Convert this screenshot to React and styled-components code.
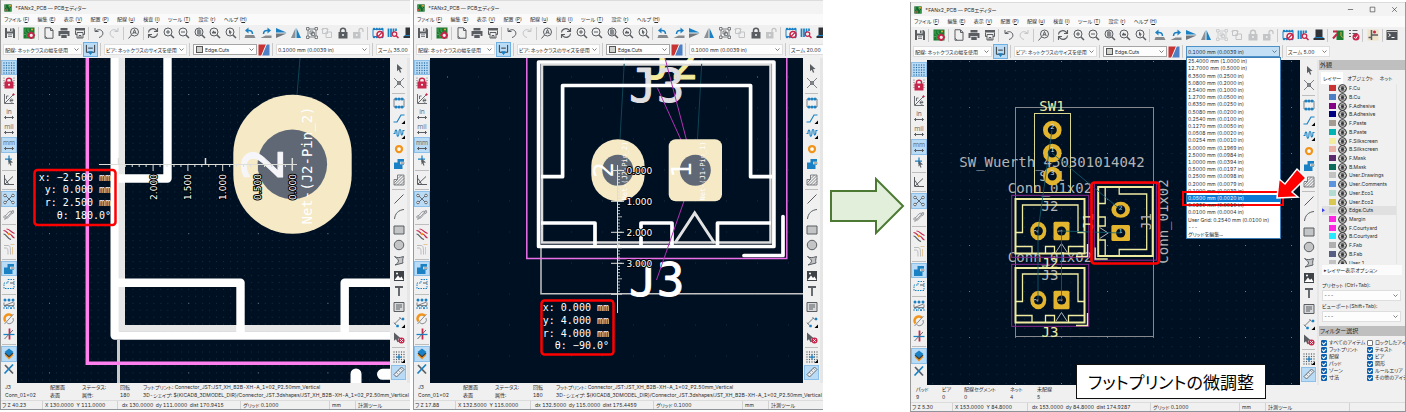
import React from "react";
import styled, { createGlobalStyle } from "styled-components";

const C = {
  ink: "#5a5e63",
  blue: "#1a81c4",
  chrome: "#f0f0f0",
  active: "#b9dbf5",
  board: "#001023",
  pad: "#f5e9c6",
  hole: "#5f6874",
  gold: "#e3b42d",
  silk: "#efeca2",
  fab: "#b2b4b6",
  rats: "#0d4554",
  red: "#ff0000",
};

const GlobalStyle = createGlobalStyle`
  * { box-sizing: border-box; }
  body {
    margin: 0;
    background: #fff;
    color: #2b2b2b;
    font-family: Inter, "Noto Sans CJK JP", sans-serif;
    font-size: 5px;
    font-feature-settings: "palt", "tnum";
  }
  button, select, input { font: inherit; font-feature-settings: inherit; color: inherit; margin: 0; padding: 0; }
`;

/* ---------- page ---------- */

const Page = styled.main`
  display: grid;
  grid-template-columns: minmax(0, 410fr) minmax(0, 410fr) 81px minmax(0, 496fr);
  gap: 3px;
  align-items: start;
  overflow: hidden;
`;

const ArrowCell = styled.div`
  align-self: center;
  display: flex;
  justify-content: center;
`;

const WindowFrame = styled.section`
  margin-top: ${(p) => (p.$lowered ? "2px" : "0")};
  border-left: 1px solid #9a9a9a;
  border-right: ${(p) => (p.$lowered ? "1px solid #9a9a9a" : "0")};
  border-bottom: 1px solid #8d959b;
  background: ${C.chrome};
`;

const TitleBar = styled.header`
  display: flex;
  align-items: center;
  gap: 3px;
  height: 14px;
  padding: 0 6px 0 3px;
  background: #f3f3f3;
  border-top: 1px solid #dcdcdc;
`;

const Title = styled.h1`
  flex: 1;
  margin: 0;
  font-size: 5px;
  font-weight: 400;
  white-space: nowrap;
`;

const WindowButton = styled.button`
  display: flex;
  width: 8px;
  margin-left: 11px;
  border: 0;
  background: none;
`;

const MenuBar = styled.nav`
  display: flex;
  align-items: center;
  gap: 8px;
  height: 11px;
  padding-left: 3px;
  background: #fafafa;
  overflow: hidden;
`;

const MenuButton = styled.button`
  border: 0;
  background: none;
  line-height: 9px;
  white-space: nowrap;
`;

const ToolBar = styled.div`
  height: 16px;
  padding-left: 1px;
  overflow: hidden;
`;

const ToolStrip = styled.div`
  display: flex;
  align-items: center;
  width: 488px;
  height: 16px;
`;

const ToolButton = styled.button`
  flex: 1;
  min-width: 0;
  min-height: 0;
  display: flex;
  align-items: center;
  justify-content: center;
  border: 1px solid ${(p) => (p.$on ? "#8cc0e8" : "transparent")};
  background: ${(p) => (p.$on ? C.active : "none")};
  color: ${(p) => (p.disabled ? "#c2c4c6" : C.ink)};
`;

const Divider = styled.span`
  flex: none;
  width: 1px;
  height: 13px;
  margin: 0 2px 0 1px;
  background: #c9c9c9;
`;

const SideDivider = styled.span`
  flex: none;
  height: 1px;
  margin: 2px 1px 1px;
  background: #bdbdbd;
`;

const OptionBar = styled.div`
  display: flex;
  align-items: center;
  gap: 1px;
  height: 17px;
  padding-left: 2px;
  overflow: ${(p) => (p.$open ? "visible" : "hidden")};
`;

const Combo = styled.div`
  flex: none;
  position: relative;
  display: grid;
  align-items: center;
  width: ${(p) => (p.$fill ? "auto" : p.$width + "px")};
  height: 11px;
  border: 1px solid ${(p) => (p.$open ? "#4f91c7" : p.$boxed ? "#a5a5a5" : "#dedede")};
  background: ${(p) => (p.$open ? "#c2dff5" : "#fdfdfd")};
`;

const ComboSelect = styled.select`
  grid-area: 1 / 1;
  width: 100%;
  height: 9px;
  padding-left: ${(p) => (p.$swatch ? "11px" : "1px")};
  border: 0;
  background: none;
  appearance: none;
  white-space: nowrap;
`;

const ComboSwatch = styled.span`
  grid-area: 1 / 1;
  width: 7px;
  height: 7px;
  margin-left: 2px;
  border: 1px solid #555;
  background: #d0d2cd;
`;

const ComboArrow = styled.svg`
  grid-area: 1 / 1;
  justify-self: end;
  width: 5px;
  height: 5px;
  margin-right: 2px;
  fill: none;
  stroke: #555;
  pointer-events: none;
`;

const WidthButton = styled.button`
  flex: none;
  display: flex;
  align-items: center;
  justify-content: center;
  width: 15px;
  height: 15px;
  border: 1px solid #6fb0e2;
  background: ${C.active};
`;

const LayerPairButton = styled.button`
  flex: none;
  display: flex;
  width: 12px;
  height: 12px;
  border: 0;
  background: none;
`;

const GridMenu = styled.ul`
  position: absolute;
  z-index: 3;
  top: 10px;
  left: -1px;
  display: flex;
  flex-direction: column;
  width: 95px;
  height: 182px;
  margin: 0;
  padding: 0;
  border: 1px solid #3c7fb8;
  background: #fff;
  list-style: none;
`;

const GridOption = styled.li`
  position: relative;
  flex: 1;
  display: flex;
  align-items: center;
  min-height: 0;
  padding-left: 1px;
  line-height: 7px;
  white-space: nowrap;
  background: ${(p) => (p.$on ? "#0b78d3" : "transparent")};
  color: ${(p) => (p.$on ? "#fff" : "#2b2b2b")};
`;

const Callout = styled.span`
  position: absolute;
  inset: -4px -4px -4px -5px;
  border: 2px solid ${C.red};
`;

const CalloutArrow = styled.svg`
  position: absolute;
  z-index: 4;
  left: 88px;
  bottom: 2px;
  width: 32px;
  height: 34px;
`;

/* ---------- body ---------- */

const Body = styled.div`
  display: flex;
`;

const SideBar = styled.div`
  flex: none;
  display: flex;
  flex-direction: column;
  width: ${(p) => (p.$right ? "17px" : "16px")};
  padding: ${(p) => (p.$right ? "2px 1px 3px" : "2px 0 6px")};
`;

const Gutter = styled.span`
  flex: none;
  width: ${(p) => (p.$narrow ? "2px" : "3px")};
  background: #e6e6e6;
`;

const CanvasArea = styled.div`
  position: relative;
  flex: 1;
  min-width: 0;
  height: 325px;
  background: ${C.board};
`;

const Board = styled.svg`
  display: block;
  width: 100%;
  height: 100%;
`;

const BoardText = styled.text`
  font-family: "DejaVu Sans Mono", monospace;
  font-size: ${(p) => p.$size || 14}px;
  fill: ${(p) => p.$color || C.fab};
`;

const BigText = styled.text`
  font-family: "DejaVu Sans Mono", monospace;
  font-size: ${(p) => p.$size}px;
  fill: ${(p) => p.$color || "#fff"};
  stroke: ${(p) => p.$color || "#fff"};
  stroke-width: ${(p) => (p.$size > 30 ? 1 : 0)}px;
  stroke-linejoin: round;
`;

const RulerText = styled.text`
  font-family: "DejaVu Sans", sans-serif;
  font-size: 9px;
  fill: #fff;
  stroke: #000;
  stroke-width: 2px;
  stroke-linejoin: round;
  paint-order: stroke;
`;

const MeasureText = styled.text`
  font-family: "DejaVu Sans Mono", monospace;
  font-size: 10px;
  fill: #fff;
  stroke: ${(p) => (p.$halo ? "#000" : "#fff")};
  stroke-width: ${(p) => (p.$halo ? 2 : 0)}px;
  text-anchor: end;
`;

const Caption = styled.p`
  position: absolute;
  z-index: 2;
  right: 34px;
  bottom: -14px;
  display: flex;
  align-items: center;
  justify-content: center;
  width: 190px;
  height: 35px;
  margin: 0;
  border: 1px solid #111;
  background: #fff;
  color: #000;
  font-family: "Noto Sans CJK JP", sans-serif;
  font-size: 17px;
  white-space: nowrap;
`;

/* ---------- footer ---------- */

const InfoBar = styled.dl`
  display: flex;
  height: 17px;
  margin: 0;
  padding-left: ${(p) => (p.$wide ? "5px" : "4px")};
  overflow: hidden;
  white-space: nowrap;
`;

const InfoItem = styled.div`
  flex: none;
  width: ${(p) => p.$width}px;
  line-height: 8px;
  dd { margin: 0; }
`;

const StatusBar = styled.footer`
  display: flex;
  height: 9px;
  border-top: 1px solid #dcdcdc;
  line-height: 8px;
  overflow: hidden;
`;

const StatusCell = styled.span`
  flex: none;
  width: ${(p) => p.$width}px;
  padding-left: ${(p) => p.$pad || 2}px;
  border-right: 1px solid #d2d2d2;
  white-space: pre;
`;

/* ---------- appearance panel ---------- */

const Panel = styled.aside`
  flex: none;
  width: 86px;
  overflow: hidden;
`;

const PanelTitle = styled.h2`
  height: 10px;
  margin: ${(p) => (p.$spaced ? "4px" : "0")} 0 0;
  padding-left: 1px;
  background: #bfbfbf;
  font-size: 6px;
  font-weight: 400;
  line-height: 10px;
`;

const Tabs = styled.div`
  display: flex;
  gap: 2px;
  height: 12px;
  margin-top: 2px;
  padding-left: 2px;
`;

const Tab = styled.button`
  padding: 0 2px;
  border: 0;
  background: ${(p) => (p.$on ? "#fff" : "none")};
  line-height: 12px;
  white-space: nowrap;
`;

const LayerPane = styled.div`
  display: flex;
  height: 180px;
  overflow: hidden;
`;

const LayerList = styled.ul`
  flex: 1;
  display: grid;
  grid-template-rows: repeat(21, 1fr);
  height: 183px;
  margin: 0;
  padding: 0 0 0 3px;
  list-style: none;
`;

const LayerRow = styled.li`
  display: flex;
  align-items: center;
  gap: 2px;
  min-height: 0;
  background: ${(p) => (p.$on ? "#e0e0e0" : "none")};
  line-height: 8px;
  white-space: nowrap;
`;

const LayerMark = styled.span`
  width: 3px;
  height: 4px;
  margin-right: 2px;
  background: ${(p) => (p.$on ? "#3d3df0" : "none")};
  clip-path: polygon(0 0, 100% 50%, 0 100%);
`;

const Swatch = styled.span`
  width: 7px;
  height: 6px;
  background: ${(p) => p.$color};
`;

const EyeButton = styled.button`
  display: flex;
  width: 9px;
  height: 8px;
  border: 0;
  background: none;
`;

const ScrollTrack = styled.span`
  width: 9px;
  padding: 7px 4px 0;
  border-left: 1px solid #e4e4e4;
  &::before {
    content: "";
    display: block;
    height: 114px;
    background: #8a8a8a;
  }
`;

const Disclosure = styled.button`
  display: block;
  width: 80px;
  height: 10px;
  margin: 1px 0 0 3px;
  padding-left: 2px;
  border: 0;
  background: #fbfbfb;
  line-height: 10px;
  text-align: left;
  white-space: nowrap;
`;

const Field = styled.label`
  display: block;
  margin: ${(p) => (p.$first ? "6px" : "1px")} 4px 0 3px;
  line-height: 9px;
  white-space: nowrap;
`;

const FilterGrid = styled.div`
  display: grid;
  grid-template-columns: 46px 60px;
  grid-auto-rows: 7px;
  margin-top: 3px;
  padding-left: 2px;
`;

const Check = styled.label`
  display: flex;
  align-items: center;
  gap: 2px;
  line-height: 7px;
  white-space: nowrap;
`;

const CheckBox = styled.input`
  appearance: none;
  display: flex;
  align-items: center;
  justify-content: center;
  width: 6px;
  height: 6px;
  border: 1px solid #777;
  border-radius: 1px;
  background: #fff;
  &:checked { border-color: #0b5fae; background: #0b5fae; }
  &:checked::after {
    content: "";
    width: 4px;
    height: 2px;
    border: solid #fff;
    border-width: 0 0 1px 1px;
    transform: rotate(-45deg);
  }
`;

/* ---------- icons (24 unit grid) ---------- */

const Glyph = styled.svg`
  flex: none;
  width: ${(p) => p.$size || 12}px;
  height: ${(p) => p.$size || 12}px;
  fill: none;
  stroke: currentColor;
  stroke-width: 2;
`;

const dots = (cols, rows, color, r = 1.2) =>
  rows.flatMap((y) => cols.map((x) => <circle key={x + "-" + y} cx={x} cy={y} r={r} fill={color} stroke="none" />));
const lens = (
  <>
    <circle cx="10" cy="10" r="8" />
    <path d="M16 16l6 6" strokeWidth="3" />
  </>
);
const unitArrow = <path d="M3 19h18M6 16l-3 3 3 3M18 16l3 3-3 3" />;

const icons = {
  save: (
    <g stroke="none">
      <path d="M2 2h17l3 3v17H2z" fill="currentColor" />
      <path d="M6 2h11v7H6zM6 13h12v9H6z" fill="#f0f0f0" />
      <path d="M12 3h3v5h-3zM8 15h8v1.500H8zM8 18h8v1.500H8z" fill="currentColor" />
    </g>
  ),
  board: (
    <g>
      <path d="M1 1h22v22H1z" fill="#1c7a31" stroke="none" />
      <path d="M4 3v6l4 4v8M10 3v5l5 4M2 15h4" stroke="#57b868" strokeWidth="1.500" />
      <circle cx="18" cy="5" r="2" fill="#f2a93b" stroke="none" />
      <circle cx="16.500" cy="16.500" r="5" fill="#f0f0f0" stroke="#c8254a" strokeWidth="3.500" />
      <path d="M16.500 8.500v3M16.500 21.500v2.500M8.500 16.500h3M21.500 16.500H24" stroke="#c8254a" strokeWidth="3" />
    </g>
  ),
  app: (
    <g>
      <path d="M1 1h22v22H1z" fill="#17652a" stroke="none" />
      <path d="M5 1v9l5 5v8M13 1v6l6 6v10" stroke="#4fc065" />
      <circle cx="18" cy="5" r="3" fill="#f2a93b" stroke="none" />
      <circle cx="5" cy="18" r="3" fill="#e0503a" stroke="none" />
    </g>
  ),
  page: <path d="M4 1.500h11l5 5v16H4zM15 2v5h5M8 22.500l-3.500-4" />,
  print: (
    <g fill="currentColor" stroke="none">
      <path d="M5 2h14v5H5zM1 8h22v10h-4v-4H5v4H1zM6.500 15.500h11V22h-11z" />
    </g>
  ),
  plot: (
    <g>
      <path d="M2 2h20v5H2z" fill="currentColor" stroke="none" />
      <path d="M3 7v8h3M21 7v8h-3M6 11h12v11H6zM10 22v-5h4v5" />
    </g>
  ),
  undo: <path d="M4 2v7h7M4.500 8.500C9 5 15 4 18 8c4 5 1 11-6 13" />,
  redo: <path d="M20 2v7h-7M19.500 8.500C15 5 9 4 6 8c-4 5-1 11 6 13" />,
  find: (
    <g>
      <circle cx="13" cy="10" r="8" />
      <path d="M7 16l-6 7M9.500 14L13 5l3.500 9M10.500 11.500h5" />
    </g>
  ),
  refresh: <path d="M3 11C3 5 11 1 17 5l3 3M21 2v7h-7M21 13c0 6-8 10-14 6l-3-3M3 22v-7h7" strokeWidth="2.200" />,
  zoomIn: <g>{lens}<path d="M6 10h8M10 6v8" /></g>,
  zoomOut: <g>{lens}<path d="M6 10h8" /></g>,
  zoomFit: <g>{lens}<path d="M7 5.500h5l1.500 2v7H7z" fill="currentColor" opacity=".7" /></g>,
  zoomObj: <g>{lens}<path d="M6 11l3-4 3 3 2-1v4H6z" fill="currentColor" stroke="none" /></g>,
  zoomSel: <g>{lens}<path d="M8 5l6 6-3 .5 1 3-2 .5-1-3-1 1z" fill="currentColor" stroke="none" /></g>,
  rotL: (
    <g>
      <path d="M3 16h17l3 6H1z" fill="currentColor" stroke="none" opacity=".7" />
      <path d="M8 7c6-1 9 2 9 7" stroke={C.blue} strokeWidth="3" />
      <path d="M9 1v12L2 7z" fill={C.blue} stroke="none" />
    </g>
  ),
  rotR: (
    <g>
      <path d="M1 22l10-5h12v5z" fill="currentColor" stroke="none" opacity=".7" />
      <path d="M16 7C10 6 7 9 7 14" stroke={C.blue} strokeWidth="3" />
      <path d="M15 1v12l7-6z" fill={C.blue} stroke="none" />
    </g>
  ),
  flip: (
    <g stroke="none">
      <path d="M2 2l21 9H2z" fill={C.blue} />
      <path d="M2 13h21L2 22z" fill="#6f767c" />
    </g>
  ),
  mirror: (
    <g stroke="none">
      <path d="M11 2v20H2z" fill="#8b9096" />
      <path d="M13 2v20h9z" fill={C.blue} />
    </g>
  ),
  group: (
    <g strokeWidth="1.500">
      <path d="M4 4h16v16H4z" />
      <path d="M1 1h5v5H1zM18 1h5v5h-5zM1 18h5v5H1zM18 18h5v5h-5z" fill="#f0f0f0" />
      <path d="M8 8h6v6H8zM11 11h6v6h-6z" />
    </g>
  ),
  ungroup: <path d="M3 3h10v10H3zM10 10h11v11H10zM1 5h4M11 5h4" />,
  lock: (
    <g>
      <path d="M7 11V7c0-6 10-6 10 0v4" strokeWidth="3" />
      <path d="M3 10h18v13H3z" fill="currentColor" stroke="none" />
      <circle cx="12" cy="16" r="2" fill="#f0f0f0" stroke="none" />
    </g>
  ),
  unlock: (
    <g>
      <path d="M14 11V7c0-6 8-6 8 0v3" strokeWidth="2.500" />
      <path d="M2 10h15v13H2z" fill="currentColor" stroke="none" />
      <circle cx="9.500" cy="16" r="2" fill="#f0f0f0" stroke="none" />
    </g>
  ),
  footprint: (
    <g>
      <path d="M2 5h20v14H2z" stroke={C.blue} />
      {dots([4, 9.5, 15, 20.5], [4, 20], C.blue, 2.5)}
      <circle cx="16" cy="15" r="6" stroke="#c8254a" strokeWidth="3" fill="#fff" />
      <path d="M12 19l8-8" stroke="#c8254a" strokeWidth="2.500" />
    </g>
  ),
  library: (
    <g>
      <path d="M3 3v17M8 3v17M13 3v12M18 3v5" stroke={C.blue} strokeWidth="3.500" />
      <circle cx="15" cy="14" r="4.500" stroke="#c8254a" fill="#f0f0f0" strokeWidth="2.500" />
      <path d="M18 17l5 5" stroke="#c8254a" strokeWidth="3" />
    </g>
  ),
  chip: (
    <g stroke="none">
      <path d="M5 1h14v15H5z" fill="#303337" />
      <path d="M1 18h22v4H1z" fill="#303337" />
      <path d="M3 16h18v2H3z" fill={C.blue} />
    </g>
  ),
  sync: (
    <g>
      <path d="M9 3h14v19H9z" fill="#1c7a31" stroke="none" />
      <path d="M18 6v7l3 4" stroke="#f2a93b" />
      <path d="M2 5h8M2 19l8-9" stroke="#c8254a" strokeWidth="4" />
    </g>
  ),
  drc: (
    <g>
      <path d="M2 3h4M9 3h10M2 9h4M9 9h10M2 15h4" strokeWidth="2" />
      <circle cx="16" cy="16" r="7" fill="#c8254a" stroke="none" />
      <path d="M12.500 16l3 3 4-6" stroke="#fff" />
    </g>
  ),
  schematic: (
    <g>
      <path d="M1 1h22v22H1z" fill="#efe3c9" stroke="none" />
      <path d="M9 2v20M9 12h13M3 17h6" strokeWidth="3" />
      <circle cx="15" cy="6" r="3" fill="#c8254a" stroke="none" />
    </g>
  ),
  console: (
    <g>
      <path d="M1 2h22v20H1z" fill="#4f5358" stroke="none" />
      <path d="M5 9l4 3-4 3M11 17h6" stroke="#fff" />
      <path d="M2 5h20" stroke="#c9c9c9" />
    </g>
  ),
  grid: <g>{dots([2, 7, 12, 17, 22], [2, 7, 12, 17, 22], "#2b6ea3", 1.4)}</g>,
  gridLock: (
    <g>
      {dots([2, 22], [2, 7, 12, 17], C.ink)}
      <path d="M7 10V6c0-5 10-5 10 0v4" stroke="#c8254a" strokeWidth="3" />
      <path d="M3 9h18v14H3z" fill="#c8254a" stroke="none" />
      <circle cx="12" cy="15.500" r="2" fill="#fff" stroke="none" />
    </g>
  ),
  polar: (
    <g strokeWidth="1.800">
      <path d="M3 2v19h19M4 20L20 4M7 12V6h4M14 15h6M19 18c-6 2-6-6-2-6 3 0 3 3 3 3" />
      <circle cx="21" cy="3" r="1.500" fill="#c8254a" stroke="#c8254a" />
    </g>
  ),
  cursor: (
    <g>
      <path d="M12 3v13M4 10h14" stroke={C.blue} strokeWidth="2.500" />
      <path d="M11 9l9 8-5 .5 2 5-2 1-2-5-2 3z" fill={C.ink} stroke="none" />
    </g>
  ),
  angle: <path d="M3 2v19h19M4 20L20 5M4 9l7 11" />,
  rats: (
    <g>
      <path d="M6 6l12 12M18 6L6 18" strokeWidth="1.800" />
      {[[4, 5], [20, 5], [4, 19], [20, 19]].map(([x, y]) => (
        <circle key={x + "," + y} cx={x} cy={y} r="2.600" fill="#fff" strokeWidth="1.800" />
      ))}
    </g>
  ),
  ratsCurve: (
    <g strokeWidth="1.700" stroke="#8a8e92">
      <path d="M4 14C8 13 9 5 16 4M7 19c6-1 6-9 13-11" />
      <path d="M3 22L21 2" />
      <circle cx="4" cy="16" r="2.500" /><circle cx="19" cy="6" r="2.500" />
    </g>
  ),
  tracks: (
    <g strokeWidth="2.400">
      <path d="M1 5c8 0 6 7 12 7 5 0 4 6 10 8" stroke="#c8254a" />
      <path d="M7 2c7 0 6 5 16 9" stroke="#c8254a" />
      <path d="M1 12c6 0 6 8 15 11" />
      <circle cx="12" cy="12" r="2.500" fill="#f2941b" stroke="none" />
    </g>
  ),
  tracksDim: (
    <g opacity=".6" strokeWidth="1.800">
      <path d="M2 5h8c5 0 5 5 5 18M2 10h4c4 0 4 3 4 13" stroke="#8a8e92" />
      <path d="M19 8v15M15 3h8" stroke="#e0a04b" />
    </g>
  ),
  zone: (
    <g>
      <path d="M9 2h13v12h-3v8H2V9h7z" fill={C.blue} stroke="none" />
      <path d="M14 10h9" stroke="#fff" strokeWidth="5" />
      <path d="M15 10h8" stroke={C.ink} strokeWidth="2" />
    </g>
  ),
  zoneOutline: (
    <g stroke={C.blue} strokeDasharray="3 2">
      <path d="M10 3h12v18H2V10h8z" />
      <path d="M14 10h8" stroke={C.ink} strokeDasharray="none" />
    </g>
  ),
  pads: (
    <g>
      {dots([4, 12, 20], [4], C.blue, 3)}
      <path d="M2 22v-3c0-3 5-3 5 0v3M10 22v-3c0-3 5-3 5 0v3M17 22v-3c0-3 5-3 5 0v3" stroke={C.blue} strokeWidth="1.800" />
      <path d="M3 15L21 8M2 9v6h20V9" strokeWidth="1.500" />
    </g>
  ),
  via: (
    <g>
      <path d="M5 17a8 8 0 0113-11" stroke="#f2941b" strokeWidth="5" />
      <path d="M20 10a8 8 0 01-13 9" stroke="#8a8e92" />
      <path d="M3 22L21 2" stroke="#8a8e92" />
    </g>
  ),
  cross: (
    <g>
      <path d="M13 1v22" stroke="#c8254a" strokeWidth="3.500" />
      <path d="M1 13h22" stroke={C.blue} strokeWidth="2.500" />
      <path d="M3 22L20 4" strokeWidth="1.800" />
    </g>
  ),
  layers: (
    <g stroke="none">
      <path d="M12 8l9 6-9 9-9-9z" fill="#f2941b" />
      <path d="M12 4l9 7-9 8-9-8z" fill="#3b3b3b" />
      <path d="M12 1l9 7-9 8-9-8z" fill={C.blue} />
    </g>
  ),
  tools: (
    <g strokeWidth="3.500">
      <path d="M4 4l16 17" />
      <path d="M20 3L3 21" stroke={C.blue} />
    </g>
  ),
  pointer: <path d="M8 4l11 10-5 .5 2.500 6-2.500 1-2.500-6-3.500 3z" fill="currentColor" stroke="none" />,
  ratsnest: <path d="M2 2l20 20M22 2L2 22M9 9h6v6H9z" strokeWidth="1.500" />,
  addFootprint: (
    <g>
      <path d="M2 4h20v16H2z" strokeWidth="1.500" />
      {dots([6, 12, 18], [4, 20], C.blue, 3)}
    </g>
  ),
  route: <path d="M1 20h7L16 6h7" stroke={C.blue} strokeWidth="2.400" />,
  tune: <path d="M1 13h3c0-9 4-9 4 0s4 6 4-2 4-8 4 0 4 6 4-4h3" stroke={C.blue} strokeWidth="2.200" />,
  addVia: <circle cx="12" cy="12" r="6" stroke="#f2941b" strokeWidth="4.500" fill="#fff" />,
  hatch: (
    <g strokeWidth="1.500">
      <path d="M9 2h13v20H2V11h7z" />
      <path d="M3 17l6-6M3 22l18-18M9 22l13-13M15 22l7-7M10 9l7-7" />
    </g>
  ),
  line: <path d="M3 21L21 3" />,
  arc: <path d="M3 22C4 11 11 4 22 3" />,
  rect: <path d="M2 4h20v16H2z" fill="#c2c4c6" />,
  circle: <circle cx="12" cy="12" r="9.500" fill="#c2c4c6" />,
  polygon: <path d="M3 3c5 3 9 3 18 0-2 6-2 9-1 13l-16 4c5-3 7-6 7-8 0-3-4-6-8-9z" fill="#c2c4c6" />,
  image: (
    <g stroke="none">
      <path d="M2 2h20v20H2z" fill="#3f4347" />
      <path d="M3 20l7-9 4 5 3-3 4 7z" fill="#fff" />
      <circle cx="8" cy="7" r="2" fill="#fff" />
    </g>
  ),
  text: <path d="M4 4h16M12 4v18" strokeWidth="3.600" />,
  textbox: <g><path d="M2 3h20v18H2z" fill="#d6d7d8" /><path d="M6 8h12M6 12h12M6 16h8" /></g>,
  dimension: (
    <g>
      <path d="M3 16L15 4M2 13l4 5M13 2l4 5" strokeWidth="1.600" />
      <path d="M18 4h4v4h-4zM7 18h4v4H7z" fill={C.blue} stroke={C.blue} strokeWidth="1" />
    </g>
  ),
  remove: (
    <g>
      <path d="M2 1l14 12-6 .5 2 6-3 1-3-6-4 3z" fill="currentColor" stroke="none" />
      <circle cx="17" cy="17" r="6" fill="#c8254a" stroke="none" />
      <path d="M14.500 14.500l5 5M19.500 14.500l-5 5" stroke="#fff" />
    </g>
  ),
  origin: (
    <g>
      {dots([2, 7, 12, 17, 22], [2, 7, 12, 17, 22], C.ink, 1.3)}
      <path d="M7 12h10M12 7v10" stroke={C.blue} strokeWidth="2.500" />
    </g>
  ),
  ruler: <path d="M2 17L17 2l5 5L7 22zM7 13l2 2M11 9l2 2M15 5l2 2" fill="#e8edf2" strokeWidth="1.800" />,
};

const withCorner = new Set(["route", "tune", "dimension", "origin"]);

function Icon({ name, size }) {
  return (
    <Glyph viewBox="0 0 24 24" $size={size} aria-hidden="true">
      {icons[name]}
      {withCorner.has(name) && <path d="M24 17v7h-7z" fill="#000" stroke="none" />}
    </Glyph>
  );
}

const UnitGlyph = styled.text`
  font-family: "Open Sans", sans-serif;
  font-size: 13px;
  fill: ${C.ink};
  stroke: none;
  text-anchor: middle;
`;

function UnitIcon({ unit }) {
  return (
    <Glyph viewBox="0 0 24 24" $size={12} aria-hidden="true">
      <UnitGlyph x="12" y="12">{unit}</UnitGlyph>
      {unitArrow}
    </Glyph>
  );
}

/* ---------- chrome data ---------- */

const menus = [
  ["ファイル", "F"], ["編集", "E"], ["表示", "V"], ["配置", "P"], ["配線", "u"],
  ["検査", "I"], ["ツール", "T"], ["設定", "r"], ["ヘルプ", "H"],
];

const topTools = [
  "save", "|", "board", "|", "page", "print", "plot", "|", "undo", "redo", "|", "find", "|",
  "refresh", "zoomIn", "zoomOut", "zoomFit", "zoomObj", "zoomSel", "|",
  "rotL", "rotR", "flip", "mirror", "group", "ungroup", "lock", "unlock", "|",
  "footprint", "library", "chip", "|", "sync", "drc", "|", "schematic", "|", "console",
];

const leftTools = [
  "grid", "gridLock", "polar", "in", "mil", "mm", "cursor", "|", "angle", "|", "rats", "ratsCurve", "|",
  "tracks", "tracksDim", "|", "zone", "zoneOutline", "|", "pads", "via", "cross", "|", "layers", "tools",
];
const leftOn = ["grid", "mm", "rats", "zone", "layers"];

const rightTools = [
  "pointer", "ratsnest", "|", "addFootprint", "route", "tune", "addVia", "zone", "hatch", "|",
  "line", "arc", "rect", "circle", "polygon", "image", "text", "textbox", "dimension", "remove", "|",
  "origin", "ruler",
];

const gridSizes = [
  "25.4000 mm (1.0000 in)", "12.7000 mm (0.5000 in)", "6.3500 mm (0.2500 in)", "5.0800 mm (0.2000 in)",
  "2.5400 mm (0.1000 in)", "1.2700 mm (0.0500 in)", "0.6350 mm (0.0250 in)", "0.5080 mm (0.0200 in)",
  "0.2540 mm (0.0100 in)", "0.1270 mm (0.0050 in)", "0.0508 mm (0.0020 in)", "0.0254 mm (0.0010 in)",
  "5.0000 mm (0.1969 in)", "2.5000 mm (0.0984 in)", "1.0000 mm (0.0394 in)", "0.5000 mm (0.0197 in)",
  "0.2500 mm (0.0098 in)", "0.2000 mm (0.0079 in)", "0.1000 mm (0.0039 in)", "0.0500 mm (0.0020 in)",
  "0.0250 mm (0.0010 in)", "0.0100 mm (0.0004 in)", "User Grid: 0.2540 mm (0.0100 in)", "---", "グリッドを編集...",
];

const layers = [
  ["F.Cu", "#c83434"], ["B.Cu", "#4d7fc4"], ["F.Adhesive", "#840084"], ["B.Adhesive", "#000084"],
  ["F.Paste", "#a39a92"], ["B.Paste", "#00b3b3"], ["F.Silkscreen", "#f2eda1"], ["B.Silkscreen", "#e8b2a7"],
  ["F.Mask", "#5b2a6e"], ["B.Mask", "#0c6b5b"], ["User.Drawings", "#c2c2c2"], ["User.Comments", "#5994dc"],
  ["User.Eco1", "#b4dbd2"], ["User.Eco2", "#d8c852"], ["Edge.Cuts", "#d0d2cd"], ["Margin", "#ff26e2"],
  ["F.Courtyard", "#ff26e2"], ["B.Courtyard", "#26e9ff"], ["F.Fab", "#afafaf"], ["B.Fab", "#585d84"],
  ["User.1", "#c2c2c2"],
];

const filters = [
  ["すべてのアイテム", true], ["ロックしたアイテム", false], ["フットプリント", true], ["テキスト", true],
  ["配線", true], ["ビア", true], ["パッド", true], ["図形", true],
  ["ゾーン", true], ["ルールエリア", true], ["寸法", true], ["その他のアイテム", true],
];

/* ---------- chrome ---------- */

function ComboBox({ label, value, width, swatch, boxed, open, fill, children }) {
  return (
    <Combo $width={width} $boxed={boxed} $open={open} $fill={fill}>
      <ComboSelect aria-label={label} defaultValue={value} $swatch={swatch}>
        <option>{value}</option>
      </ComboSelect>
      {swatch && <ComboSwatch />}
      <ComboArrow viewBox="0 0 10 10"><path d="M1 3l4 4 4-4" strokeWidth="1.500" /></ComboArrow>
      {children}
    </Combo>
  );
}

function SideTools({ tools, on, right }) {
  return (
    <SideBar $right={right}>
      {tools.map((t, i) =>
        t === "|" ? (
          <SideDivider key={i} />
        ) : (
          <ToolButton key={i} aria-label={t} $on={on.includes(t)}>
            {["in", "mil", "mm"].includes(t) ? <UnitIcon unit={t} /> : <Icon name={t} />}
          </ToolButton>
        )
      )}
    </SideBar>
  );
}

function GridDropdown() {
  return (
    <GridMenu>
      {gridSizes.map((size, i) => (
        <GridOption key={i} $on={i === 19}>
          {size}
          {i === 19 && (
            <>
              <Callout />
              <CalloutArrow viewBox="0 0 32 34">
                <path d="M2 32L4 13l6 5L22 3l9 9-14 14 6 5z" fill={C.red} stroke="#fff" strokeWidth="1.500" />
              </CalloutArrow>
            </>
          )}
        </GridOption>
      ))}
    </GridMenu>
  );
}

function AppearancePanel() {
  return (
    <Panel>
      <PanelTitle>外観</PanelTitle>
      <Tabs>
        <Tab $on>レイヤー</Tab>
        <Tab>オブジェクト</Tab>
        <Tab>ネット</Tab>
      </Tabs>
      <LayerPane>
        <LayerList>
          {layers.map(([name, color]) => (
            <LayerRow key={name} $on={name === "Edge.Cuts"}>
              <LayerMark $on={name === "Edge.Cuts"} />
              <Swatch $color={color} />
              <EyeButton aria-label={name}>
                <Glyph viewBox="0 0 24 24" $size={9}>
                  <circle cx="12" cy="12" r="10" strokeWidth="3" />
                  <path d="M2 12c5-7 15-7 20 0-5 7-15 7-20 0z" fill="#fff" strokeWidth="2" />
                  <circle cx="12" cy="12" r="3.500" fill="currentColor" />
                </Glyph>
              </EyeButton>
              {name}
            </LayerRow>
          ))}
        </LayerList>
        <ScrollTrack />
      </LayerPane>
      <Disclosure>▸レイヤー表示オプション</Disclosure>
      <Field $first>
        プリセット (Ctrl+Tab):
        <ComboBox label="プリセット" value="---" fill />
      </Field>
      <Field>
        ビューポート(Shift+Tab):
        <ComboBox label="ビューポート" value="---" fill />
      </Field>
      <PanelTitle $spaced>フィルター選択</PanelTitle>
      <FilterGrid>
        {filters.map(([name, on]) => (
          <Check key={name}>
            <CheckBox type="checkbox" defaultChecked={on} />
            {name}
          </Check>
        ))}
      </FilterGrid>
    </Panel>
  );
}

function EditorWindow({ zoom, lowered, disabled, info, status, children }) {
  return (
    <WindowFrame $lowered={lowered}>
      <TitleBar>
        <Icon name="app" size={8} />
        <Title>*FANx2_PCB — PCBエディター</Title>
        {lowered &&
          [["最小化", "M3 12h18"], ["最大化", "M4 4h16v16H4z"], ["閉じる", "M4 4l16 16M20 4L4 20"]].map(([label, d]) => (
            <WindowButton key={label} aria-label={label}>
              <Glyph viewBox="0 0 24 24" $size={7}><path d={d} /></Glyph>
            </WindowButton>
          ))}
      </TitleBar>
      <MenuBar>
        {menus.map(([name, key]) => (
          <MenuButton key={name}>{name} (<u>{key}</u>)</MenuButton>
        ))}
      </MenuBar>
      <ToolBar>
        <ToolStrip>
          {topTools.map((t, i) =>
            t === "|" ? <Divider key={i} /> : (
              <ToolButton key={i} aria-label={t} disabled={disabled.includes(t)}><Icon name={t} /></ToolButton>
            )
          )}
        </ToolStrip>
      </ToolBar>
      <OptionBar $open={lowered}>
        <ComboBox label="配線幅" value="配線: ネットクラスの幅を使用" width={79} />
        <WidthButton aria-label="自動幅">
          <Glyph viewBox="0 0 24 24" $size={11}>
            <path d="M3 2v16h18V2M7 9h10" />
            <path d="M8 17l4 6 4-6z" fill={C.blue} stroke={C.blue} />
          </Glyph>
        </WidthButton>
        <Divider />
        <ComboBox label="ビアサイズ" value="ビア: ネットクラスのサイズを使用" width={83} />
        <Divider />
        <ComboBox label="レイヤー" value="Edge.Cuts" width={64} swatch boxed />
        <LayerPairButton aria-label="レイヤーペア">
          <Glyph viewBox="0 0 24 24" $size={12}>
            <path d="M1 1h16L7 23H1z" fill="#c83434" stroke="none" />
            <path d="M17 1h6v22H7z" fill="#4d7fc4" stroke="none" />
            <path d="M17 0L7 24" stroke="#f0f0f0" />
          </Glyph>
        </LayerPairButton>
        <Divider />
        <ComboBox label="グリッド" value="0.1000 mm (0.0039 in)" width={94} open={lowered}>
          {lowered && <GridDropdown />}
        </ComboBox>
        <Divider />
        <ComboBox label="ズーム" value={"ズーム " + zoom} width={44} />
      </OptionBar>
      <Body>
        <SideTools tools={leftTools} on={leftOn} />
        <CanvasArea>
          {children}
          {lowered && <Caption>フットプリントの微調整</Caption>}
        </CanvasArea>
        <SideTools tools={rightTools} on={["ruler"]} right />
        <Gutter $narrow={lowered} />
        {lowered && <AppearancePanel />}
      </Body>
      <InfoBar $wide={lowered}>
        {info.map(([term, value, width]) => (
          <InfoItem key={term} $width={width}>
            <dt>{term}</dt>
            <dd>{value}</dd>
          </InfoItem>
        ))}
      </InfoBar>
      <StatusBar>
        <StatusCell $width={42} $pad={1}>{"フ Z " + status.z}</StatusCell>
        <StatusCell $width={75}>{status.pos}</StatusCell>
        <StatusCell $width={123} $pad={4}>{status.delta}</StatusCell>
        <StatusCell $width={89}>グリッド 0.1000</StatusCell>
        <StatusCell $width={26}>mm</StatusCell>
        <StatusCell $width={84}>計測ツール</StatusCell>
      </StatusBar>
    </WindowFrame>
  );
}

/* ---------- boards ---------- */

function Dots({ id, x, y, step, major, box }) {
  const [bx, by, bw, bh] = box;
  return (
    <>
      <defs>
        <pattern id={id + "a"} x={x} y={y} width={step} height={step} patternUnits="userSpaceOnUse">
          <rect width="1" height="1" fill="#172b40" />
        </pattern>
        <pattern id={id + "b"} x={x} y={y} width={major} height={major} patternUnits="userSpaceOnUse">
          <rect width="1" height="1" fill="#6a7884" />
        </pattern>
      </defs>
      <rect x={bx} y={by} width={bw} height={bh} fill={`url(#${id}a)`} />
      <rect x={bx} y={by} width={bw} height={bh} fill={`url(#${id}b)`} />
    </>
  );
}

function Measure({ x, y, w, h, right, lines }) {
  return (
    <g>
      <rect x={x} y={y} width={w} height={h} rx="3" fill="none" stroke={C.red} strokeWidth="2.500" />
      {lines.map((line, i) => (
        <MeasureText key={line} x={right} y={y + 10.5 + i * 12.8}>{line}</MeasureText>
      ))}
    </g>
  );
}

const range = (n) => Array.from({ length: n }, (_, i) => i);

function PadCloseup() {
  return (
    <Board viewBox="17 58 373 325" preserveAspectRatio="xMinYMin slice">
      <Dots id="g1" x={49} y={94} step={6.96} major={69.6} box={[17, 58, 373, 325]} />
      <path d="M300 58l-3 37" stroke={C.rats} />
      <g fill="none">
        <path d="M121.700 58v270.300H390" stroke="#e6e6e6" strokeWidth="6.600" />
        <path d="M118.500 340v43" stroke="#c9c9c9" strokeWidth="3" />
        <g stroke="#fff" strokeWidth="8.400" strokeLinejoin="round">
          <path d="M114.700 54v281.500H394" />
          <path d="M118 178.500h49.500V54" />
          <path d="M118 282.700h122.500v50M394 282.700h-49.300v50" />
        </g>
        <path d="M87.300 58v305.200H390" stroke="#ff80ee" strokeWidth="3.500" />
        <path d="M356 374v14M382.500 374.300H396" stroke="#fff" strokeWidth="11" strokeLinecap="round" />
      </g>
      <rect x="233.300" y="94.700" width="118.400" height="139" rx="59.200" fill={C.pad} />
      <circle cx="292.300" cy="164.300" r="34.800" fill={C.hole} />
      <BigText $size={56} $color="#f6f6fa" textAnchor="middle" transform="translate(282 164.500) rotate(-90)">2</BigText>
      <BoardText $color="#fff" transform="translate(312 224.500) rotate(-90)">Net-(J2-Pin_2)</BoardText>
      <g stroke="#deded8" fill="none">
        <path d="M99 164.500h198" />
        <path d="M118.500 158v7M205.500 158v7M292.300 158v12" strokeWidth="1.500" />
        <path d={range(25).map((i) => `M${292.3 - i * 6.96} 165v${i % 5 === 0 ? 6 : 2}`).join("")} />
      </g>
      {range(5).map((i) => (
        <RulerText key={i} textAnchor="middle" transform={`translate(${295.8 - i * 34.8} 187) rotate(-90)`}>
          {(i * 0.5).toFixed(3)}
        </RulerText>
      ))}
      <path d="M35 182.500h76M87 175v46" stroke={C.board} strokeWidth="0" />
      <Measure x={34.5} y={170} w={81} h={55} right={111}
        lines={["x: −2.500 mm", "y: 0.000 mm", "r: 2.500 mm", "θ: 180.0°"]} />
    </Board>
  );
}

function ConnectorCloseup() {
  return (
    <Board viewBox="430 58 373 325" preserveAspectRatio="xMinYMin slice">
      <Dots id="g2" x={447} y={76.5} step={31} major={310} box={[430, 58, 373, 325]} />
      <BigText $size={46} $color="#f3ec9c" x="643" y="79">J2</BigText>
      <g fill="none">
        <path d="M541 248v45.700h262" stroke="#c4c4c4" strokeWidth="1.500" />
        <rect x="542" y="64.500" width="228.500" height="178" stroke="#dcdcdc" strokeWidth="2.500" />
        <path d="M675 243l19.700-30 19.700 30" stroke="#e2e2e2" strokeWidth="3" />
        <path d="M624.500 58L620 139M702 58l-4.500 81" stroke={C.rats} />
      </g>
      <BigText $size={46} $color="#dfdfe2" x="629" y="102">J3</BigText>
      <g fill="none" stroke="#fff" strokeWidth="3.700" strokeLinejoin="round">
        <rect x="538.600" y="62" width="235.300" height="184.500" />
        <path d="M541 176.700h21.600V85.500h188v91.200H772" />
        <path d="M541 223h54v22M641 245v-22h31v22M771 223h-53.500v22" />
        <path d="M783 216.500v39h-39" strokeLinecap="round" />
      </g>
      <BigText $size={46} x="629" y="296">J3</BigText>
      <path d="M526.800 58v200.500h260V58" fill="none" stroke="#ee6fea" strokeWidth="1.500" />
      <path d="M665 58l21.500 82M657 87l24 53M684 201l-27.500 79" stroke="#b12fb4" fill="none" />
      <rect x="591.300" y="139.300" width="53.300" height="62" rx="26.600" fill={C.pad} />
      <rect x="668.700" y="139.300" width="53.300" height="62" rx="7" fill={C.pad} />
      <circle cx="617.800" cy="170.300" r="15.500" fill={C.hole} />
      <circle cx="695.300" cy="170.300" r="15.500" fill={C.hole} />
      <BigText $size={26} textAnchor="middle" transform="translate(613 170) rotate(-90)">2</BigText>
      <BigText $size={26} textAnchor="middle" transform="translate(691 170) rotate(-90)">1</BigText>
      <BoardText $size={7} $color="#fff" transform="translate(627 200.500) rotate(-90)">Net-(J2-Pin_2)</BoardText>
      <BoardText $size={7} $color="#fff" transform="translate(705 200.500) rotate(-90)">Net-(J1-Pin_1)</BoardText>
      <g stroke="#deded8">
        <path d="M617.500 165v148" />
        <path d="M611 170.500h13M611 201.300h13M611 232.300h13M611 263.300h13M611 294.300h7" />
        <path d={range(41).map((i) => `M618 ${170.3 + i * 3.1}h${i % 5 === 0 ? 4 : 2}`).join("")} strokeWidth=".800" />
      </g>
      {range(4).map((i) => (
        <RulerText key={i} x="626.500" y={173.8 + i * 31}>{i.toFixed(3)}</RulerText>
      ))}
      <Measure x={541.5} y={300.5} w={72} h={54} right={609}
        lines={["x: 0.000 mm", "y: 4.000 mm", "r: 4.000 mm", "θ: −90.0°"]} />
    </Board>
  );
}

/* Two pin JST header, origin on pin 1. */
function Header({ transform }) {
  return (
    <g transform={transform} fill="none">
      <rect x="-49.800" y="-35.700" width="77" height="62" stroke="#8a2a92" />
      <g stroke={C.silk} strokeWidth="1.300">
        <rect x="-46" y="-32" width="69" height="54.500" strokeWidth="2" />
        <path d="M-46 1.500h7V-26h55.500V1.500H23" />
        <path d="M-46 15.500h16.500v7M-16 22.500v-7h9v7M23 15.500H7v7" />
        <path d="M26 13v12.500H14.500" />
      </g>
      <path d="M-5.500 21L0 12.500 5.500 21" stroke={C.fab} />
      <ellipse cx="-23.200" cy="0" rx="8" ry="9.300" fill={C.gold} />
      <rect x="-8" y="-9.300" width="16" height="18.600" rx="1.500" fill={C.gold} />
      <circle cx="-23.200" r="4.600" fill={C.board} />
      <circle r="4.600" fill={C.board} />
      <BoardText $size={6} $color="#cfe3e8" transform="translate(-23.200 2) rotate(-90)">2</BoardText>
      <BoardText $size={6} $color="#cfe3e8" transform="translate(0 2) rotate(-90)">1</BoardText>
    </g>
  );
}

function BoardOverview() {
  return (
    <Board viewBox="927 60 373 325" preserveAspectRatio="xMinYMin slice">
      <Dots id="g3" x={1015} y={61} step={9.2} major={46} box={[927, 60, 373, 325]} />
      <rect x="1015.500" y="107.500" width="138" height="229" fill="none" stroke="#85898d" />
      <BoardText textAnchor="middle" x="1052" y="167">SW_Wuerth_450301014042</BoardText>
      <BoardText textAnchor="middle" x="1052" y="181">SW1</BoardText>
      <BoardText textAnchor="middle" x="1050" y="193">Conn_01x02</BoardText>
      <BoardText textAnchor="middle" x="1050" y="211">J2</BoardText>
      <BoardText textAnchor="middle" x="1050" y="262">Conn_01x02</BoardText>
      <BoardText textAnchor="middle" x="1050" y="280">J3</BoardText>
      <Header transform="translate(1061.500 231)" />
      <Header transform="translate(1061.500 300)" />
      <Header transform="translate(1120.700 233) rotate(90)" />
      <rect x="1034.500" y="113.500" width="36" height="79" fill="none" stroke="#d8d68c" />
      {[["2", 130], ["1", 153], ["3", 176]].map(([pin, y]) => (
        <g key={pin}>
          <circle cx="1052.300" cy={y} r="6.900" fill={C.board} stroke={C.gold} strokeWidth="4.800" />
          <BoardText $size={7} $color="#cfe3e8" textAnchor="middle" x="1052.300" y={y - 1}>{pin}</BoardText>
        </g>
      ))}
      <path d="M1052 130l-14 101v69M1061.500 231v69M1062 231l59 2M1052 153l69 57" fill="none" stroke="#14606e" strokeWidth=".800" />
      <BoardText $color={C.silk} textAnchor="middle" x="1052" y="110.500">SW1</BoardText>
      <BoardText $color={C.silk} textAnchor="middle" x="1050" y="268">J2</BoardText>
      <BoardText $color={C.silk} textAnchor="middle" x="1050" y="337">J3</BoardText>
      <BoardText $color={C.silk} textAnchor="middle" transform="translate(1093 221.500) rotate(-90)">J1</BoardText>
      <BoardText textAnchor="middle" transform="translate(1151 221.500) rotate(-90)">J1</BoardText>
      <BoardText textAnchor="middle" transform="translate(1168 221.500) rotate(-90)">Conn_01x02</BoardText>
      <rect x="1091.500" y="182.500" width="67.500" height="81" rx="3" fill="none" stroke={C.red} strokeWidth="2.700" />
    </Board>
  );
}

const partInfo = [
  ["J3", "Conn_01x02", 45],
  ["配置面", "表面", 32],
  ["ステータス:", "属性:", 38],
  ["回転", "180", 23],
  [
    "フットプリント: Connector_JST:JST_XH_B2B-XH-A_1x02_P2.50mm_Vertical",
    "3D-シェイプ: ${KICAD8_3DMODEL_DIR}/Connector_JST.3dshapes/JST_XH_B2B-XH-A_1x02_P2.50mm_Vertical",
    290,
  ],
];

const boardInfo = [
  ["パッド", "9", 26], ["ビア", "0", 22], ["配線セグメント", "0", 46], ["ネット", "4", 27], ["未配線", "5", 40],
];

export default function App() {
  return (
    <Page>
      <GlobalStyle />
      <EditorWindow zoom="35.00" disabled={["redo", "ungroup", "unlock"]} info={partInfo}
        status={{ z: "40.23", pos: "X 130.0000  Y 111.0000", delta: "dx 130.0000  dy 111.0000  dist 170.9415" }}>
        <PadCloseup />
      </EditorWindow>
      <EditorWindow zoom="20.00" disabled={["redo", "ungroup", "unlock"]} info={partInfo}
        status={{ z: "17.88", pos: "X 132.5000  Y 115.0000", delta: "dx 132.5000  dy 115.0000  dist 175.4459" }}>
        <ConnectorCloseup />
      </EditorWindow>
      <ArrowCell>
        <svg width="76" height="58" viewBox="0 0 76 58" aria-hidden="true">
          <path d="M2 14h45V2l27 27-27 27V44H2z" fill="#e2efda" stroke="#4c7a34" strokeWidth="2" />
        </svg>
      </ArrowCell>
      <EditorWindow lowered zoom="5.00" disabled={["redo", "group", "ungroup", "lock", "unlock"]} info={boardInfo}
        status={{ z: "5.30", pos: "X 153.0000  Y 84.8000", delta: "dx 153.0000  dy 84.8000  dist 174.9287" }}>
        <BoardOverview />
      </EditorWindow>
    </Page>
  );
}
